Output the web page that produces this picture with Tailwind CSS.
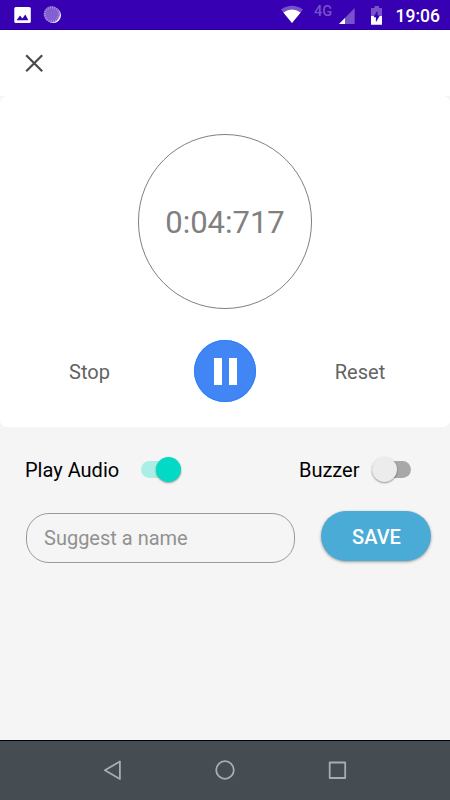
<!DOCTYPE html>
<html lang="en">
<head>
<meta charset="utf-8">
<meta name="viewport" content="width=device-width, initial-scale=1">
<title>Stopwatch</title>
<script src="https://cdn.jsdelivr.net/npm/@tailwindcss/browser@4"></script>
</head>
<body class="bg-[#f5f5f5]">
<div class="flex h-[800px] w-[450px] flex-col overflow-hidden bg-[#f5f5f5] font-['Roboto',sans-serif]">
  <!-- Status bar -->
  <header class="flex h-[30px] shrink-0 items-start justify-between border-b border-[#2b00a0] bg-[#3700b3] text-white">
    <svg class="h-[29px] w-[80px]" viewBox="0 0 80 29">
      <rect x="14.3" y="7" width="16.5" height="16" rx="1.6" fill="#fff"/>
      <path d="M16.5 20.2l3.6-4.6 2.3 2.8 2.9-4 3.1 5.8z" fill="#3700b3"/>
      <circle cx="53.2" cy="15.3" r="7.8" fill="#fff"/>
      <circle cx="51.8" cy="14.3" r="8.1" fill="#7c55cf"/>
      <circle cx="51.8" cy="14.3" r="6.9" fill="none" stroke="#a88fdf" stroke-width="2.4" stroke-dasharray="1 1.17"/>
      <circle cx="51.8" cy="14.3" r="5.8" fill="#8260d1"/>
    </svg>
    <div class="flex">
      <svg class="h-[29px] w-[113px]" viewBox="277 0 113 29">
        <path d="M281 9.5Q292 2 303 9.5L292 23z" fill="#fff" fill-opacity=".32"/>
        <path d="M283.4 12.4Q292 6.8 300.6 12.4L292 23z" fill="#fff"/>
        <text x="314" y="16" font-family="Roboto, sans-serif" font-size="14.5" font-weight="500" fill="#fff" fill-opacity=".32">4G</text>
        <path d="M339 24L354.7 8V24z" fill="#fff" fill-opacity=".32"/>
        <path d="M339 24L345 18V24z" fill="#fff"/>
        <path d="M374.5 6h4.5v2h3v8h-11V8h3.5z" fill="#fff" fill-opacity=".32"/>
        <path d="M371 16h11v8.2q0 .6-.6.6h-9.8q-.6 0-.6-.6z" fill="#fff"/>
        <path d="M377.5 10.5l-4 6.7h2.4v5l4-6.7h-2.4z" fill="#3700b3"/>
      </svg>
      <span class="w-[60px] pt-[6px] pl-[5.5px] text-[17.5px] leading-[20px] font-medium whitespace-nowrap">19:06</span>
    </div>
  </header>

  <div class="flex h-[66px] shrink-0 items-center bg-white pl-[25px]">
    <button aria-label="Close"><svg class="block size-[18px]" viewBox="0 0 18 18" fill="none" stroke="#4a4a4a" stroke-width="2.2"><path d="M1.2 1.2l16 16M17.2 1.2l-16 16"/></svg></button>
  </div>

  <!-- Timer card -->
  <main class="flex h-[331px] shrink-0 flex-col items-center rounded-[7px] bg-white pt-[38px]">
    <div class="flex h-[175px] w-[174px] items-center justify-center rounded-full border border-[#808080] text-[31px] leading-none text-[#808080]"><span class="pt-[2px]">0:04:717</span></div>
    <div class="mt-[31px] grid w-full grid-cols-[180px_90px_180px] items-center text-center text-[20px] text-[#636363]">
      <button class="pt-[2px] pr-px">Stop</button>
      <button aria-label="Pause" class="flex size-[62px] items-center justify-center justify-self-center gap-[7px] rounded-full bg-[#4285f4] ring-inset ring-1 ring-[#2f80f5]"><span class="h-[27px] w-2 bg-white"></span><span class="h-[27px] w-2 bg-white"></span></button>
      <button class="pt-[2px]">Reset</button>
    </div>
  </main>

  <!-- Options -->
  <section class="flex h-[85px] shrink-0 items-center justify-between pr-[39px] pl-[25px] text-[20px] text-black">
    <label class="flex items-center"><span class="pt-px">Play Audio</span>
      <span class="ml-[22px] flex h-[17px] w-[39.5px] items-center justify-end rounded-full bg-[#a9efe5]"><span class="size-[25px] shrink-0 rounded-full bg-[#03dac5] shadow-[0_1px_2px_rgba(0,0,0,0.4)]"></span></span>
    </label>
    <label class="flex items-center"><span class="pt-px">Buzzer</span>
      <span class="ml-[12px] flex h-[17px] w-[39.5px] items-center rounded-full bg-[#a8a8a8]"><span class="size-[25px] shrink-0 rounded-full bg-[#ececec] shadow-[0_1px_2px_rgba(0,0,0,0.4)]"></span></span>
    </label>
  </section>

  <div class="flex grow items-start pt-px pr-[19px] pl-[26px]">
    <input class="h-[50px] w-[269px] rounded-[23px] border border-[#999] bg-transparent px-[17px] text-[20px] outline-none placeholder:text-[#919191]" placeholder="Suggest a name">
    <button class="-mt-[2px] ml-auto h-[50px] w-[110px] rounded-[25px] bg-[#4aabd6] pt-[2px] pl-px text-[20px] font-medium text-white shadow-[0_1px_3px_rgba(0,0,0,0.38)]">SAVE</button>
  </div>

  <!-- System navigation -->
  <nav class="grid h-[60px] shrink-0 grid-cols-[112px_113px_112px] justify-center border-t border-black bg-[#454d52]">
    <svg class="h-[59px] w-[112px]" viewBox="0 0 112 59" fill="none" stroke="#a9adaf" stroke-width="1.8" stroke-linejoin="round"><path d="M62.9 20.5v17.5L47.9 29.2z"/></svg>
    <svg class="h-[59px] w-[113px]" viewBox="0 0 113 59" fill="none" stroke="#a9adaf" stroke-width="1.8"><circle cx="56" cy="29" r="8.8"/></svg>
    <svg class="h-[59px] w-[112px]" viewBox="0 0 112 59" fill="none" stroke="#a9adaf" stroke-width="1.8" stroke-linejoin="round"><path d="M47.7 21.5h15.5v15.5h-15.5z"/></svg>
  </nav>
</div>
</body>
</html>
